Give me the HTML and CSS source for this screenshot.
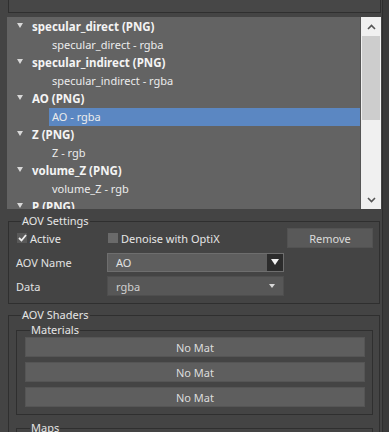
FILE: index.html
```html
<!DOCTYPE html>
<html>
<head>
<meta charset="utf-8">
<link rel="stylesheet" href="styles.css">
</head>
<body>
<div class="app">
  <div class="topbar"></div>
  <div class="listwrap">
    <div class="list">
      <div class="row hdr"><span class="tri"></span>specular_direct (PNG)</div>
      <div class="row child">specular_direct - rgba</div>
      <div class="row hdr"><span class="tri"></span>specular_indirect (PNG)</div>
      <div class="row child">specular_indirect - rgba</div>
      <div class="row hdr"><span class="tri"></span>AO (PNG)</div>
      <div class="row child sel">AO - rgba</div>
      <div class="row hdr"><span class="tri"></span>Z (PNG)</div>
      <div class="row child">Z - rgb</div>
      <div class="row hdr"><span class="tri"></span>volume_Z (PNG)</div>
      <div class="row child">volume_Z - rgb</div>
      <div class="row hdr"><span class="tri"></span>P (PNG)</div>
    </div>
    <div class="scroll">
      <div class="sbtn"><svg width="9" height="6" viewBox="0 0 9 6"><path d="M1 5 L4.5 1.5 L8 5" fill="none" stroke="#555" stroke-width="1.6"/></svg></div>
      <div class="thumb"></div>
      <div class="track"></div>
      <div class="sbtn"><svg width="9" height="6" viewBox="0 0 9 6"><path d="M1 1 L4.5 4.5 L8 1" fill="none" stroke="#555" stroke-width="1.6"/></svg></div>
    </div>
  </div>

  <fieldset class="group settings">
    <legend>AOV Settings</legend>
    <div class="crow">
      <label class="chk active"><span class="box checked"><svg width="9" height="8" viewBox="0 0 9 8"><path d="M1 4 L3.5 6.5 L8 1" fill="none" stroke="#eee" stroke-width="1.8"/></svg></span>Active</label>
      <label class="chk denoise"><span class="box"></span>Denoise with OptiX</label>
      <div class="spacer"></div>
      <div class="btn remove">Remove</div>
    </div>
    <div class="frow">
      <div class="flabel">AOV Name</div>
      <div class="combo name"><span class="val">AO</span><span class="dbtn"><span class="wtri"></span></span></div>
    </div>
    <div class="frow">
      <div class="flabel">Data</div>
      <div class="combo data"><span class="val">rgba</span><span class="stri"></span></div>
    </div>
  </fieldset>

  <fieldset class="group shaders">
    <legend>AOV Shaders</legend>
    <fieldset class="sub mats">
      <legend>Materials</legend>
      <div class="btn mat">No Mat</div>
      <div class="btn mat">No Mat</div>
      <div class="btn mat">No Mat</div>
    </fieldset>
    <fieldset class="sub maps">
      <legend>Maps</legend>
      <div class="btn mat"></div>
    </fieldset>
  </fieldset>
</div>
</body>
</html>
```
FILE: styles.css
```css
* { box-sizing: border-box; }
html, body { margin: 0; padding: 0; }
body {
  background: #3a3a3a;
  font-family: "Noto Sans", "Open Sans", sans-serif;
  font-size: 11px;
  color: #e2e2e2;
  overflow: hidden;
  width: 389px;
  height: 432px;
}
.app {
  width: 383px;
  height: 432px;
  background: #444444;
  border-right: 1px solid #2e2e2e;
  overflow: hidden;
}
.topbar {
  height: 13px;
  margin: 0 1px 0 8px;
  border: 1px solid #2f2f2f;
  border-top: none;
  background: #474747;
}
.listwrap {
  display: flex;
  margin: 4px 1px 0 7px;
  height: 192px;
  background: #555;
}
.list {
  flex: 1;
  background: #636363;
  padding-top: 1px;
  overflow: hidden;
  margin-right: 1px;
}
.row {
  height: 18px;
  line-height: 18px;
  white-space: nowrap;
}
.hdr {
  display: flex;
  align-items: center;
  padding-left: 10px;
  font-weight: bold;
  font-size: 11.5px;
  color: #f4f4f4;
}
.tri {
  width: 0;
  height: 0;
  border-left: 3px solid transparent;
  border-right: 3px solid transparent;
  border-top: 5px solid #d8d8d8;
  margin-right: 9px;
  margin-bottom: 3px;
}
.child {
  margin-left: 42px;
  padding-left: 3px;
  color: #ececec;
}
.sel { background: #5b87c2; }
.scroll {
  width: 20px;
  display: flex;
  flex-direction: column;
  background: #f0f0f0;
}
.sbtn {
  height: 19px;
  display: flex;
  align-items: center;
  justify-content: center;
}
.thumb {
  height: 84px;
  background: #cdcdcd;
  margin: 0 1px 0 1px;
}
.track { flex: 1; }

fieldset.group {
  margin: 5px 2px 0 8px;
  padding: 0 6px 7px 7px;
  border: 1px solid #2f2f2f;
  min-width: 0;
}
legend {
  margin-left: 5px;
  padding: 0 1px;
  line-height: 14px;
  height: 14px;
  color: #e6e6e6;
}
.crow {
  display: flex;
  align-items: center;
  height: 20px;
}
.chk {
  display: flex;
  align-items: center;
  color: #e6e6e6;
}
.active { width: 92px; padding-left: 1px; }
.box {
  width: 10px;
  height: 10px;
  margin-right: 3px;
  background: #6a6a6a;
  display: flex;
  align-items: center;
  justify-content: center;
}
.box.checked { background: #595959; }
.spacer { flex: 1; }
.btn {
  background: #595959;
  border: 1px solid #525252;
  color: #dcdcdc;
  display: flex;
  align-items: center;
  justify-content: center;
}
.remove {
  width: 86px;
  height: 20px;
}
.frow {
  display: flex;
  align-items: center;
  margin-top: 4px;
  height: 20px;
}
.flabel { width: 91px; }
.combo {
  width: 177px;
  height: 20px;
  display: flex;
  align-items: center;
  padding-left: 8px;
}
.combo .val { flex: 1; }
.name {
  background: #5e5e5e;
  border: 1px solid #6e6e6e;
  height: 19px;
}
.dbtn {
  width: 16px;
  height: 17px;
  background: #2c2c2c;
  display: flex;
  align-items: center;
  justify-content: center;
}
.wtri {
  width: 0; height: 0;
  border-left: 4px solid transparent;
  border-right: 4px solid transparent;
  border-top: 6px solid #f2f2f2;
}
.data {
  background: #575757;
  border: 1px solid #4e4e4e;
  color: #d0d0d0;
}
.stri {
  width: 0; height: 0;
  border-left: 3px solid transparent;
  border-right: 3px solid transparent;
  border-top: 4px solid #d8d8d8;
  margin-right: 8px;
}
fieldset.shaders { margin-top: 4px; padding-bottom: 0; }
fieldset.sub {
  margin: 1px 0 0 0;
  padding: 0 7px 7px 8px;
  border: 1px solid #2f2f2f;
  min-width: 0;
}
.mat {
  height: 20px;
  margin-bottom: 5px;
  background: #5e5e5e;
  border: 1px solid #555;
}
.mat:last-child { margin-bottom: 0; }
fieldset.maps { margin-top: 6px; }
```
